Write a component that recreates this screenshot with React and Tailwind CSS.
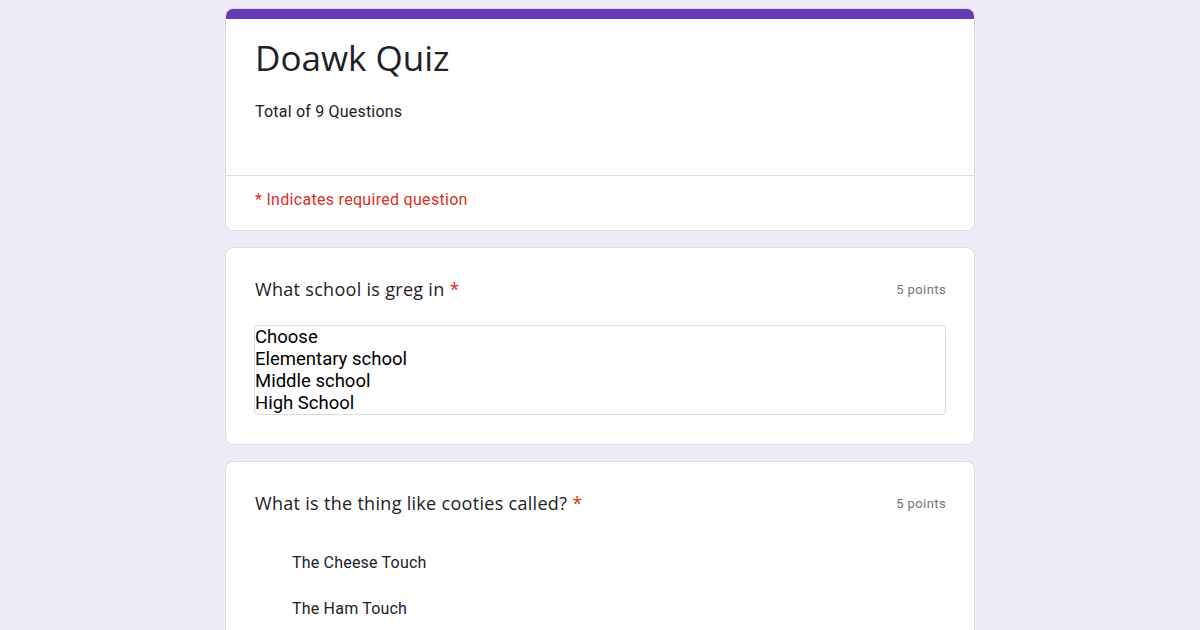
import React from "react";

const sans = { fontFamily: "Roboto, 'Liberation Sans', sans-serif" };

// --- QUESTION CARD ---
const QuestionCard = ({ title, points, children }) => (
    <div className="bg-white rounded-lg border border-[#dadce0] px-[28px] pt-[29px] pb-[29px]">
        <div className="flex items-start justify-between">
            <div className="pl-[1px] text-[18px] leading-[24px] text-[#202124] tracking-[0.3px]" style={{ fontFamily: "'Open Sans', Roboto, sans-serif" }}>
                {title} <span className="text-[#d93025]">*</span>
            </div>
            <div className="text-[13px] leading-[24px] text-[#70757a] tracking-[0.4px] pt-[1px]">{points}</div>
        </div>
        {children}
    </div>
);

export default function App() {
    const schools = ["Choose", "Elementary school", "Middle school", "High School"];

    return (
        <div className="h-[630px] overflow-hidden bg-[#f0ebf8] pt-[8px]" style={sans}>
            <div className="w-[750px] mx-auto flex flex-col gap-[16px]">

                {/* HEADER CARD */}
                <div className="bg-white rounded-lg border border-[#dadce0] overflow-hidden">
                    <div className="h-[10px] bg-[#673ab7]" />
                    <div className="px-[29px] pt-[12px] pb-[51px]">
                        <div className="text-[35px] leading-[54px] text-[#202124]" style={{ fontFamily: "'Open Sans', Roboto, sans-serif" }}>
                            Doawk Quiz
                        </div>
                        <div className="mt-[15px] text-[16px] leading-[24px] text-[#202124] tracking-[0.2px]">Total of 9 Questions</div>
                    </div>
                    <div className="border-t border-[#dadce0] px-[29px] pt-[12px] pb-[18px] text-[16px] leading-[24px] text-[#d93025] tracking-[0.3px]">
                        * Indicates required question
                    </div>
                </div>

                {/* QUESTION 1 - LISTBOX */}
                <QuestionCard title="What school is greg in" points="5 points">
                    <div className="mt-[23px] border border-[#dadce0] rounded-[4px]">
                        {schools.map((s) => (
                            <div key={s} className="text-[18.5px] leading-[22px] text-black">{s}</div>
                        ))}
                    </div>
                </QuestionCard>

                {/* QUESTION 2 - OPTIONS */}
                <QuestionCard title="What is the thing like cooties called?" points="5 points">
                    <div className="mt-[35px] pl-[38px] flex flex-col gap-[22px]">
                        <div className="text-[16px] leading-[24px] text-[#202124] tracking-[0.2px]">The Cheese Touch</div>
                        <div className="text-[16px] leading-[24px] text-[#202124] tracking-[0.2px]">The Ham Touch</div>
                    </div>
                </QuestionCard>
            </div>
        </div>
    );
}
